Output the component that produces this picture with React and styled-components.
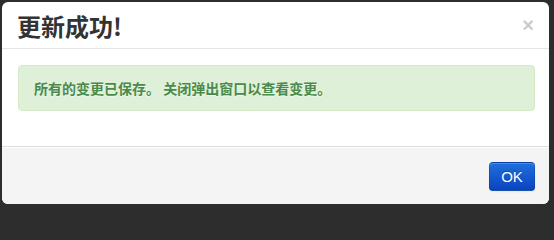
import React from "react";
import styled, { createGlobalStyle } from "styled-components";

const GlobalStyle = createGlobalStyle`
  html, body {
    margin: 0;
    padding: 0;
    background: #2d2d2d;
  }
  body {
    font-family: "Helvetica Neue", "Liberation Sans", "Noto Sans CJK SC", Arial, sans-serif;
  }
`;

const Modal = styled.div`
  margin: 2px 0 0 2px;
  width: 547px;
  height: 202px;
  background: #fff;
  border-radius: 6px;
  display: flex;
  flex-direction: column;
  overflow: hidden;
`;

const Header = styled.div`
  height: 46px;
  flex-shrink: 0;
  display: flex;
  align-items: center;
  justify-content: space-between;
  padding: 0 15px 0 15px;
  border-bottom: 1px solid #e5e5e5;
`;

const Title = styled.h3`
  margin: 0;
  font-family: "Noto Sans CJK SC", "Liberation Sans", sans-serif;
  font-size: 24px;
  font-weight: 700;
  color: #333;
  line-height: 30px;
  padding-top: 2px;
`;

const Close = styled.button`
  border: none;
  background: none;
  padding: 0;
  margin-top: 0;
  font-family: "Liberation Sans", Arial, sans-serif;
  font-size: 20px;
  font-weight: 700;
  line-height: 20px;
  color: #000;
  opacity: 0.2;
  cursor: pointer;
`;

const Body = styled.div`
  flex: 1;
  padding: 16px 14px 0 16px;
`;

const Alert = styled.div`
  height: 44px;
  box-sizing: content-box;
  display: flex;
  align-items: center;
  padding: 0 15px;
  background: #dff0d8;
  border: 1px solid #d6e9c6;
  border-radius: 4px;
  color: #4a8a4a;
  text-shadow: 0 1px 0 rgba(255, 255, 255, 0.5);
  font-family: "Noto Sans CJK SC", "Liberation Sans", sans-serif;
  font-size: 14px;
  font-weight: 700;
`;

const Footer = styled.div`
  height: 57px;
  flex-shrink: 0;
  display: flex;
  align-items: center;
  justify-content: flex-end;
  padding: 0 14px 0 15px;
  background: #f4f4f4;
  border-top: 1px solid #ddd;
  box-shadow: inset 0 1px 0 #fff;
`;

const Button = styled.button`
  width: 46px;
  height: 29px;
  margin-top: 1px;
  border: 1px solid rgba(0, 0, 0, 0.1);
  border-bottom-color: rgba(0, 0, 0, 0.25);
  border-radius: 4px;
  background: linear-gradient(to bottom, #1f6fdb, #0b44c0);
  color: #fff;
  font-family: "Liberation Sans", Arial, sans-serif;
  font-size: 15px;
  text-shadow: 0 -1px 0 rgba(0, 0, 0, 0.25);
  box-shadow: inset 0 1px 0 rgba(255, 255, 255, 0.2), 0 1px 2px rgba(0, 0, 0, 0.05);
  cursor: pointer;
`;

export default function App() {
  return (
    <>
      <GlobalStyle />
      <Modal>
        <Header>
          <Title>更新成功!</Title>
          <Close aria-label="close">×</Close>
        </Header>
        <Body>
          <Alert>所有的变更已保存。 关闭弹出窗口以查看变更。</Alert>
        </Body>
        <Footer>
          <Button>OK</Button>
        </Footer>
      </Modal>
    </>
  );
}
